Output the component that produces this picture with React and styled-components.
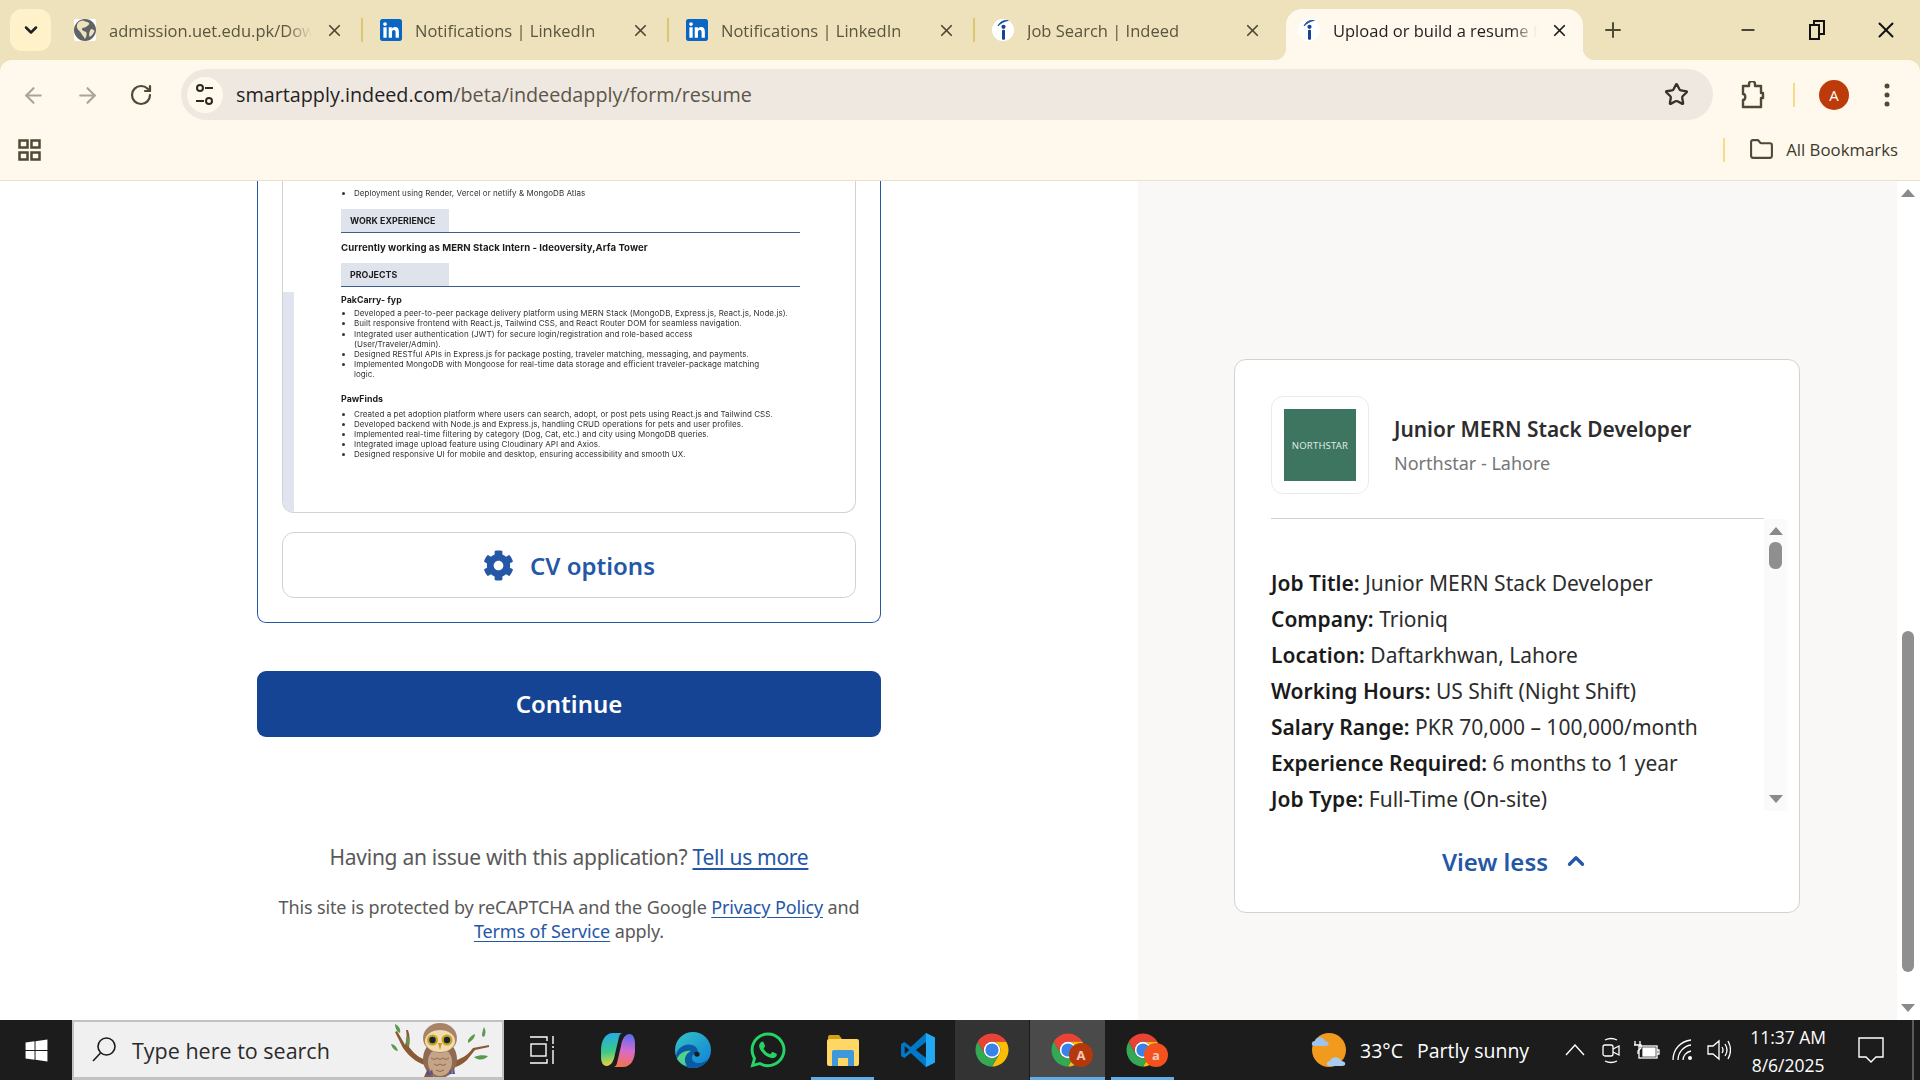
import React from 'react'
import styled, { createGlobalStyle } from 'styled-components'
import {
  ArrowLeft,
  ArrowRight,
  ChevronDown,
  ChevronUp,
  Folder,
  Minus,
  Plus,
  RotateCw,
  Star,
  X,
} from 'lucide-react'
import { FaCog, FaLinkedin, FaWhatsapp, FaWindows } from 'react-icons/fa'

const blue = '#2557a7'
const gray = '#595959'
const uiFont = '"Open Sans", "Noto Sans", sans-serif'
const pageFont = '"Noto Sans", "Open Sans", sans-serif'

const GlobalStyle = createGlobalStyle`
  html, body {
    margin: 0;
    padding: 0;
    overflow: hidden;
    background: #fff;
  }
  * {
    box-sizing: border-box;
  }
`

const Screen = styled.div`
  width: 1920px;
  height: 1080px;
  display: flex;
  flex-direction: column;
  overflow: hidden;
  font-family: ${pageFont};
`

/* browser chrome */

const TopBar = styled.div`
  background: #eee2bc;
`

const TabStrip = styled.div`
  height: 60px;
  display: flex;
  align-items: flex-end;
  padding-left: 10px;
`

const TabListButton = styled.div`
  width: 41px;
  height: 42px;
  margin: 0 6px 9px 0;
  border-radius: 12px;
  background: #fff1c9;
  color: #1f1f1f;
  display: flex;
  align-items: center;
  justify-content: center;
`

const Tab = styled.div`
  width: 304px;
  height: 42px;
  margin-bottom: 9px;
  padding: 0 17px 0 17px;
  display: flex;
  align-items: center;
  gap: 13px;
  color: #5a5440;
  font-family: ${uiFont};
`

const ActiveTab = styled(Tab)`
  position: relative;
  width: 297px;
  height: 51px;
  margin: 0 0 0 7px;
  padding: 0 14px 9px 12px;
  background: #fff8ec;
  border-radius: 16px 16px 0 0;
  color: #1f1f1f;

  &::before,
  &::after {
    content: '';
    position: absolute;
    bottom: 0;
    width: 12px;
    height: 12px;
  }
  &::before {
    left: -12px;
    background: radial-gradient(circle at 0 0, transparent 12px, #fff8ec 12.5px);
  }
  &::after {
    right: -12px;
    background: radial-gradient(circle at 100% 0, transparent 12px, #fff8ec 12.5px);
  }
`

const TabDivider = styled.div`
  width: 2px;
  height: 24px;
  margin-bottom: 18px;
  background: #dcc670;
`

const TabTitle = styled.div`
  flex: 1;
  min-width: 0;
  overflow: hidden;
  white-space: nowrap;
  font-size: 16.5px;
  -webkit-mask-image: linear-gradient(to left, transparent, #000 26px);
  mask-image: linear-gradient(to left, transparent, #000 26px);
`

const TabClose = styled(X)`
  flex: none;
  width: 19px;
  height: 19px;
  stroke-width: 2.2;
  color: ${p => (p.$active ? '#1f1f1f' : '#4f4a36')};
`

const FavWrap = styled.div`
  flex: none;
  width: 22px;
  height: 22px;
  border-radius: ${p => (p.$round ? '50%' : '2px')};
  background: #fff;
  display: flex;
  align-items: center;
  justify-content: center;
  overflow: hidden;
`

const NewTab = styled.div`
  margin: 0 0 9px 18px;
  height: 42px;
  display: flex;
  align-items: center;
  color: #4f4a36;
`

const WindowControls = styled.div`
  margin-left: auto;
  display: flex;
  height: 42px;
  margin-bottom: 9px;
  align-items: center;
`

const WindowButton = styled.div`
  width: 69px;
  display: flex;
  justify-content: center;
  color: #111;
`

const Toolbar = styled.div`
  height: 70px;
  padding: 0 0 0 6px;
  display: flex;
  align-items: center;
  background: #fff8ec;
  border-radius: 12px 12px 0 0;
`

const NavButton = styled.div`
  width: 54px;
  display: flex;
  justify-content: center;
  color: ${p => (p.$dim ? '#a8a498' : '#4f4a36')};
`

const Omnibox = styled.div`
  width: 1532px;
  height: 51px;
  margin: 0 0 1px 13px;
  padding: 0 24px 0 6px;
  border-radius: 26px;
  background: #efe8e1;
  display: flex;
  align-items: center;
`

const SiteChip = styled.div`
  flex: none;
  width: 36px;
  height: 36px;
  border-radius: 50%;
  background: #fff8ec;
  display: flex;
  align-items: center;
  justify-content: center;
  margin-right: 13px;
`

const Url = styled.div`
  flex: 1;
  font-family: ${uiFont};
  font-size: 19.75px;
  color: #5a5648;
  white-space: nowrap;
`

const UrlHost = styled.span`
  color: #1f1f1f;
`

const ToolbarCell = styled.div`
  width: ${p => p.$w}px;
  display: flex;
  justify-content: center;
  align-items: center;
  color: #4f4a36;
`

const BarDivider = styled.div`
  flex: none;
  width: 2px;
  height: 24px;
  background: #f6dc88;
`

const Avatar = styled.div`
  width: 30px;
  height: 30px;
  border-radius: 50%;
  background: #bd3a0b;
  color: #fff;
  font-family: ${uiFont};
  font-size: 15px;
  display: flex;
  align-items: center;
  justify-content: center;
`

const BookmarksBar = styled.div`
  height: 51px;
  padding: 0 22px 11px 18px;
  display: flex;
  align-items: center;
  background: #fff8ec;
  border-bottom: 1px solid #ebe1cd;
`

const BookmarksRight = styled.div`
  margin-left: auto;
  display: flex;
  align-items: center;
`

const BookmarkLabel = styled.span`
  margin-left: 12px;
  font-family: ${uiFont};
  font-size: 16.8px;
  color: #3c3a2e;
  white-space: nowrap;
`

const FolderIcon = styled(Folder)`
  margin-left: 24px;
  color: #4f4a36;
`

/* page */

const Page = styled.div`
  flex: 1;
  min-height: 0;
  display: flex;
  overflow: hidden;
`

const Main = styled.main`
  width: 1138px;
  flex: none;
  padding-left: 257px;
  background: #fff;
`

const Column = styled.div`
  width: 624px;
`

const FormCard = styled.div`
  padding: 0 24px 24px;
  border: 1px solid ${blue};
  border-top: none;
  border-radius: 0 0 9px 9px;
`

const Preview = styled.div`
  height: 332px;
  display: flex;
  overflow: hidden;
  border: 1px solid #d4d2d0;
  border-top: none;
  border-radius: 0 0 12px 12px;
`

const ResumeStrip = styled.div`
  flex: none;
  width: 11px;
  margin-top: 111px;
  background: #dfe4ee;
`

const Resume = styled.div`
  flex: 1;
  min-width: 0;
  padding: 7px 55px 0 47px;
  font-family: Inter, sans-serif;
  font-size: 8px;
  letter-spacing: 0.04px;
  line-height: 10.2px;
  color: #333;
  filter: blur(0.3px);
`

const ResumeList = styled.ul`
  margin: ${p => p.$top || 0}px 0 0;
  padding: 0 0 0 13px;
`

const ResumeItem = styled.li`
  margin: 0;
  padding: 0;
  white-space: nowrap;
`

const SectionHead = styled.div`
  margin-top: ${p => p.$top}px;
  border-bottom: 1.5px solid #3c5d92;
`

const SectionTag = styled.div`
  width: 108px;
  height: 23px;
  padding-left: 9px;
  display: flex;
  align-items: center;
  background: #dee3ec;
  font-weight: 700;
  font-size: 8.8px;
  color: #1c1c1c;
`

const ResumeLine = styled.div`
  margin-top: ${p => p.$top}px;
  font-weight: 700;
  font-size: ${p => p.$size || 8.8}px;
  line-height: 12px;
  color: #1c1c1c;
`

const CvButton = styled.div`
  height: 66px;
  margin-top: 19px;
  border: 1px solid #d4d2d0;
  border-radius: 12px;
  display: flex;
  align-items: center;
  justify-content: center;
  gap: 16px;
  color: ${blue};
  font-size: 24px;
  font-weight: 600;
`

const ContinueButton = styled.div`
  height: 66px;
  margin-top: 48px;
  padding-bottom: 2px;
  border-radius: 9px;
  background: #164494;
  color: #fff;
  font-size: 24px;
  font-weight: 600;
  display: flex;
  align-items: center;
  justify-content: center;
`

const IssueText = styled.p`
  margin: 105px 0 0;
  text-align: center;
  font-size: 21px;
  letter-spacing: -0.28px;
  line-height: 30px;
  color: ${gray};
`

const LegalText = styled.p`
  margin: 23px 0 0;
  text-align: center;
  font-size: 18px;
  letter-spacing: -0.13px;
  line-height: 24px;
  color: ${gray};
`

const TextLink = styled.a`
  color: ${blue};
  text-decoration: underline;
  text-underline-offset: 3px;
`

const Side = styled.aside`
  flex: 1;
  min-width: 0;
  padding: 178px 0 0 96px;
  background: #f9f8f6;
`

const JobCard = styled.div`
  width: 566px;
  height: 554px;
  padding: 36px 12px 0 36px;
  background: #fff;
  border: 1px solid #d4d2d0;
  border-radius: 12px;
`

const JobHeader = styled.div`
  width: 493px;
  display: flex;
  align-items: center;
  gap: 25px;
  padding-bottom: 24px;
  border-bottom: 1px solid #d4d2d0;
`

const LogoBox = styled.div`
  flex: none;
  width: 98px;
  height: 98px;
  border: 1px solid #ecebe9;
  border-radius: 12px;
  display: flex;
  align-items: center;
  justify-content: center;
`

const Logo = styled.div`
  width: 72px;
  height: 72px;
  background: #3d7561;
  color: #dfeae5;
  font-size: 9.5px;
  letter-spacing: 0.2px;
  display: flex;
  align-items: center;
  justify-content: center;
`

const JobTitle = styled.div`
  font-size: 20.9px;
  font-weight: 600;
  line-height: 28px;
  color: #2d2d2d;
`

const JobCompany = styled.div`
  margin-top: 7px;
  font-size: 18px;
  line-height: 26px;
  color: #767676;
`

const ScrollRow = styled.div`
  height: 292px;
  display: flex;
`

const JobBody = styled.div`
  width: 493px;
  padding-top: 46px;
`

const JobLine = styled.div`
  font-size: 21px;
  line-height: 36px;
  color: #2d2d2d;
  white-space: nowrap;
`

const JobLabel = styled.b`
  font-weight: 600;
  color: #1a1a1a;
`

const MiniScroll = styled.div`
  width: 23px;
  padding: 8px 0 8px;
  background: #fafafa;
  display: flex;
  flex-direction: column;
  align-items: center;
`

const Arrow = styled.div`
  flex: none;
  width: 0;
  height: 0;
  border-left: 7.5px solid transparent;
  border-right: 7.5px solid transparent;
  ${p => (p.$down ? 'margin-top: auto;' : '')}
  border-${p => (p.$down ? 'top' : 'bottom')}: 8px solid #8a8a8a;
`

const MiniThumb = styled.div`
  width: 13px;
  height: 27px;
  margin-top: 7px;
  border-radius: 6px;
  background: #8f8f8f;
`

const ViewLess = styled.div`
  height: 36px;
  margin-top: 32px;
  padding-right: 4px;
  width: 493px;
  display: flex;
  align-items: center;
  justify-content: center;
  gap: 15px;
  color: ${blue};
  font-size: 24px;
  font-weight: 600;
`

const PageScroll = styled.div`
  flex: none;
  width: 23px;
  padding: 8px 1px 8px 0;
  background: #fff;
  display: flex;
  flex-direction: column;
  align-items: center;
`

const PageThumb = styled.div`
  width: 12px;
  height: 341px;
  margin-top: 434px;
  border-radius: 6px;
  background: #8f8f8f;
`

/* taskbar */

const Taskbar = styled.footer`
  flex: none;
  height: 60px;
  display: flex;
  align-items: stretch;
  background: #1c1c1c;
  color: #fff;
  font-family: ${uiFont};
`

const StartButton = styled.div`
  width: 72px;
  display: flex;
  align-items: center;
  justify-content: center;
  color: #fff;
`

const SearchBox = styled.div`
  width: 432px;
  display: flex;
  align-items: center;
  padding: 0 8px 0 18px;
  background: #f0f0f0;
  border: 2px solid #c2c2c2;
  border-bottom-width: 3px;
  color: #2b2b2b;
  font-size: 21.5px;
`

const SearchLabel = styled.span`
  margin: 2px 0 0 16px;
  white-space: nowrap;
`

const OwlWrap = styled.div`
  margin-left: auto;
  align-self: flex-end;
  display: flex;
`

const TaskCell = styled.div`
  position: relative;
  flex: none;
  width: ${p => p.$w || 75}px;
  display: flex;
  align-items: center;
  justify-content: center;
  background: ${p =>
    p.$state === 'focus' ? '#4a4a4a' : p.$state === 'open' ? '#333' : 'none'};
  border-right: ${p => (p.$state === 'open' ? '1px solid #1c1c1c' : 'none')};

  &::after {
    content: '';
    display: ${p => (p.$bar ? 'block' : 'none')};
    position: absolute;
    bottom: 0;
    left: ${p => (p.$bar === 'full' ? 0 : 6)}px;
    right: ${p => (p.$bar === 'full' ? 0 : 6)}px;
    height: 3px;
    background: #63ace5;
  }
`

const ChromeBadge = styled.span`
  position: absolute;
  left: 39px;
  top: 23px;
  width: 24px;
  height: 24px;
  border-radius: 50%;
  background: ${p => p.$color};
  color: #f5c9b5;
  font-size: 13px;
  font-weight: 700;
  display: flex;
  align-items: center;
  justify-content: center;
`

const Weather = styled.div`
  margin-left: 131px;
  display: flex;
  align-items: center;
  font-size: 19.5px;
  white-space: nowrap;
`

const WeatherTemp = styled.span`
  margin: 0 14px 0 13px;
`

const Tray = styled.div`
  margin-left: 28px;
  display: flex;
`

const TrayCell = styled.div`
  width: 36px;
  display: flex;
  align-items: center;
  justify-content: center;
`

const Clock = styled.div`
  width: 100px;
  margin-left: 1px;
  padding-top: 2px;
  display: flex;
  flex-direction: column;
  justify-content: center;
  align-items: center;
  font-size: 17.5px;
  line-height: 28px;
`

const NotifyCell = styled.div`
  width: 66px;
  display: flex;
  align-items: center;
  justify-content: center;
`

const EdgeLine = styled.div`
  width: 2px;
  margin-left: auto;
  margin-right: 6px;
  background: #5a5a5a;
`

/* drawings */

const IndeedIcon = () => (
  <svg width="14" height="22" viewBox="0 0 14 22">
    <path d="M2 7C4 2.6 8 1 12.5 1.4 8.5 2 5 4 2 7Z" fill="#2557a7" stroke="#2557a7" strokeWidth="1" />
    <circle cx="7.5" cy="7.8" r="2.1" fill="#164494" />
    <rect x="6" y="10.8" width="3" height="10" rx="1" fill="#164494" />
  </svg>
)

const GlobeIcon = () => (
  <svg width="22" height="22" viewBox="0 0 22 22">
    <circle cx="11" cy="11" r="11" fill="#5f6368" />
    <path d="M9 1.5c2 1.500 5 1 6 2.500s-2 3-3 4-4 0-4 2 3 2 4 3 1 4-1 7c-1-2-3-4-4-6S2 10 3 6s4-4 6-4.500ZM17 10c2 0 3 1 3.500 2-1 3-3 5-5 6-1-3 0-6 1.500-8Z" fill="#eee2bc" />
  </svg>
)

const ChromeLogo = ({ size = 36 }) => (
  <svg width={size} height={size} viewBox="0 0 48 48">
    <path d="M43.050 13A22 22 0 0 0 4.950 13L14.470 29.500A11 11 0 0 1 24 13Z" fill="#ea4335" />
    <path d="M43.050 13H24A11 11 0 0 1 33.530 29.500L24 46A22 22 0 0 0 43.050 13Z" fill="#fbbc04" />
    <path d="M4.950 13L14.470 29.500A11 11 0 0 0 33.530 29.500L24 46A22 22 0 0 1 4.950 13Z" fill="#34a853" />
    <circle cx="24" cy="24" r="11" fill="#fff" />
    <circle cx="24" cy="24" r="8.800" fill="#3b82e8" />
  </svg>
)

const CopilotIcon = () => (
  <svg width="36" height="36" viewBox="0 0 36 36">
    <defs>
      <linearGradient id="copA" x1="0.4" y1="0" x2="0.5" y2="1">
        <stop offset="0" stopColor="#28a8e8" />
        <stop offset="0.55" stopColor="#39c98a" />
        <stop offset="1" stopColor="#f5d13c" />
      </linearGradient>
      <linearGradient id="copB" x1="0.5" y1="0" x2="0.4" y2="1">
        <stop offset="0" stopColor="#f4734a" />
        <stop offset="0.5" stopColor="#d66bcf" />
        <stop offset="1" stopColor="#5a6cf0" />
      </linearGradient>
    </defs>
    <path d="M13 1h9c-2 1-2.500 2-3 4l-4 17c-1 7-4 12-8.500 12C3 34 1 30 1 25v-7C1 9 5 1 13 1Z" fill="url(#copA)" />
    <path transform="rotate(180 18 18)" d="M13 1h9c-2 1-2.500 2-3 4l-4 17c-1 7-4 12-8.500 12C3 34 1 30 1 25v-7C1 9 5 1 13 1Z" fill="url(#copB)" />
  </svg>
)

const EdgeIcon = () => (
  <svg width="36" height="36" viewBox="0 0 36 36">
    <defs>
      <linearGradient id="edgeA" x1="0" y1="0" x2="1" y2="1">
        <stop offset="0" stopColor="#34c3c8" />
        <stop offset="1" stopColor="#0f7fd6" />
      </linearGradient>
    </defs>
    <circle cx="18" cy="18" r="18" fill="url(#edgeA)" />
    <path d="M1 24c1-9 10-13 16-11 5 1 7 6 5 9l-3 0c-4 3-2 10 6 9 2 0 6-2 8-4-3 6-9 9-15 9C10 36 3 31 1 24Z" fill="#0a5aa8" />
    <path d="M20 20c3-1 6 1 4 4-1 1-3 1-4 0-1-1-1-3 0-4Z" fill="#1c1c1c" />
    <path d="M12 34c-4-6-2-12 4-15-7-1-12 3-14 8 2 3 5 6 10 7Z" fill="#4fd18a" />
  </svg>
)

const ExplorerIcon = () => (
  <svg width="32" height="31" viewBox="0 0 32 31">
    <path d="M1 2a2 2 0 0 1 2-2h9l3 4H1Z" fill="#d69e14" />
    <rect x="0" y="4" width="32" height="27" rx="2" fill="#fed765" />
    <path d="M5 31V17a2 2 0 0 1 2-2h18a2 2 0 0 1 2 2v14h-6v-8H11v8Z" fill="#3f97dc" />
  </svg>
)

const VsCodeIcon = () => (
  <svg width="36" height="36" viewBox="0 0 100 100">
    <path d="M72 3 30 42 12 28 3 33v34l9 5 18-14 42 39 25-12V15Z" fill="#0078c8" />
    <path d="M72 3l25 12v70L72 97Z" fill="#23a9f1" />
    <path d="M72 28 44 50l28 22ZM13 39v22l13-11Z" fill="#1c1c1c" />
  </svg>
)

const Owl = () => (
  <svg width="104" height="55" viewBox="0 0 104 55">
    <path d="M34 55c2-5 4-9 6-11-10-1-20-8-27-18-2-4-5-10-8-16l2-1c3 5 6 10 8 14 2-6 2-9 1-15h2c2 6 2 11 1 17 6 8 13 13 22 14l20 1c10-3 16-6 22-14l16-3 0 2-14 3-8 10c-6 6-13 8-22 9-6 1-10 4-12 8Z" fill="#8a5a34" />
    <path d="M1 22c3 0 6 3 7 7-3 0-6-3-7-7ZM5 2c4 2 6 5 5 9-3-1-5-5-5-9ZM17 14c3 3 3 7 1 11-2-3-3-8-1-11ZM78 18c2-3 4-5 7-6 0 4-3 7-7 9ZM92 14c0-4 1-6 2-9 2 3 2 7 0 10ZM84 35c5-2 10-2 14-1-3 4-9 5-14 1Z" fill="#5b9a4e" />
    <ellipse cx="50" cy="37" rx="17" ry="19" fill="#8f6a52" />
    <ellipse cx="50" cy="40" rx="12" ry="14" fill="#c6a487" />
    <path d="M41 36q3 3 6 0M47 36q3 3 6 0M53 36q3 3 6 0M44 42q3 3 6 0M50 42q3 3 6 0M46 48q4 3 8 0" fill="none" stroke="#8f6a52" strokeWidth="1" />
    <ellipse cx="50" cy="16" rx="17" ry="15" fill="#a78469" />
    <ellipse cx="50" cy="19" rx="15" ry="11" fill="#f0dcae" />
    <circle cx="42.500" cy="18" r="5.500" fill="#c9a21c" />
    <circle cx="57" cy="18" r="5.500" fill="#c9a21c" />
    <circle cx="42.500" cy="18" r="3.200" fill="#16233f" />
    <circle cx="57" cy="18" r="3.200" fill="#16233f" />
    <path d="M48 21h4l-2 7Z" fill="#c8962e" />
    <path d="M36 53l2-6 2 5 2-5 1 5ZM59 52l1-5 2 5 2-6 1 6Z" fill="#4a4fa0" />
  </svg>
)

const WeatherIcon = () => (
  <svg width="36" height="38" viewBox="0 0 36 38">
    <circle cx="18" cy="19" r="17" fill="#f29a1d" />
    <path d="M3 15c-3 0-3-5 1-5 1-5 9-5 10 0 4 0 5 5 1 5Z" fill="#9dc3ee" />
    <path d="M18 35c-3 0-3-5 1-5 1-5 10-5 11 0 5 0 6 5 1 5Z" fill="#a9cbf0" />
  </svg>
)

const GridIcon = () => (
  <svg width="23" height="22" viewBox="0 0 23 22" fill="none" stroke="#4f4a36" strokeWidth="2.500">
    <rect x="1.500" y="1.500" width="8" height="7" />
    <rect x="13.500" y="1.500" width="8" height="7" />
    <rect x="1.500" y="13.500" width="8" height="7" />
    <rect x="13.500" y="13.500" width="8" height="7" />
  </svg>
)

const TuneIcon = () => (
  <svg width="20" height="24" viewBox="0 0 20 24" fill="none" stroke="#2b2b22" strokeWidth="2">
    <circle cx="5" cy="5" r="3" />
    <path d="M10 5h8M1 18h8" />
    <circle cx="14" cy="18" r="3" />
  </svg>
)

const PuzzleIcon = () => (
  <svg width="24" height="28" viewBox="0 0 24 28" fill="none" stroke="#4f4a36" strokeWidth="2.400">
    <path d="M2 5h6V3a3 3 0 0 1 6 0v2h6v7h2v5h-2v9H2v-7c3 0 3-6 0-6Z" strokeLinejoin="round" />
  </svg>
)

const RestoreIcon = () => (
  <svg width="16" height="20" viewBox="0 0 16 20" fill="none" stroke="#111" strokeWidth="2">
    <rect x="1" y="5" width="9" height="14" />
    <path d="M5 5V1h10v13h-5" />
  </svg>
)

const DotsIcon = () => (
  <svg width="6" height="24" viewBox="0 0 6 24" fill="#4f4a36">
    <circle cx="3" cy="3" r="2.500" />
    <circle cx="3" cy="12" r="2.500" />
    <circle cx="3" cy="21" r="2.500" />
  </svg>
)

const MagnifierIcon = () => (
  <svg width="24" height="25" viewBox="0 0 24 25" fill="none" stroke="#1c1c1c" strokeWidth="1.600">
    <circle cx="14.500" cy="9.500" r="8.500" />
    <path d="M8.500 16 1 24" />
  </svg>
)

const TaskViewIcon = () => (
  <svg width="24" height="28" viewBox="0 0 24 28" fill="none" stroke="#fff" strokeWidth="1.400">
    <path d="M0 1h17v4M0 27h17v-4M0 5h0" />
    <rect x="1" y="8" width="15" height="12" />
    <path d="M23 0v8M23 14v14M22 11h2" />
  </svg>
)

const CaretIcon = () => (
  <svg width="20" height="12" viewBox="0 0 20 12" fill="none" stroke="#fff" strokeWidth="1.400">
    <path d="M1 11 10 1l9 10" />
  </svg>
)

const CameraIcon = () => (
  <svg width="18" height="27" viewBox="0 0 18 27" fill="none" stroke="#fff" strokeWidth="1.300">
    <path d="M3 3q6-3 12 0M3 24q6 3 12 0" />
    <rect x="1" y="8" width="10" height="11" rx="2" />
    <path d="M11 12l6-3v9l-6-3" />
  </svg>
)

const BatteryIcon = () => (
  <svg width="26" height="20" viewBox="0 0 26 20" fill="none" stroke="#fff" strokeWidth="1.300">
    <rect x="5" y="6" width="18" height="12" />
    <rect x="9" y="8" width="12" height="8" fill="#fff" />
    <path d="M23 10h2v4h-2" />
    <path d="M1 1v4M6 1v4M0 5h7v3l-3 3v3" />
  </svg>
)

const WifiIcon = () => (
  <svg width="22" height="22" viewBox="0 0 22 22" fill="none" stroke="#fff" strokeWidth="1.300">
    <path d="M1 21C1 10 9 2 19 1M6 21c0-8 6-14 13-15M11 21c0-4 3-8 8-9" />
    <circle cx="18" cy="19" r="2" fill="#fff" stroke="none" />
  </svg>
)

const SpeakerIcon = () => (
  <svg width="24" height="22" viewBox="0 0 24 22" fill="none" stroke="#fff" strokeWidth="1.300">
    <path d="M1 7h5l6-5v18l-6-5H1Z" />
    <path d="M15 8q2 3 0 6M18 5q4 6 0 12M21 2q5 9 0 18" />
  </svg>
)

const NotifyIcon = () => (
  <svg width="26" height="26" viewBox="0 0 26 26" fill="none" stroke="#fff" strokeWidth="1.400">
    <path d="M1 1h24v19H18l-5 5-5-5H1Z" />
  </svg>
)

const tabs = [
  { title: 'admission.uet.edu.pk/Downloads', icon: <GlobeIcon /> },
  { title: 'Notifications | LinkedIn', icon: <FaLinkedin size={26} color="#0a66c2" /> },
  { title: 'Notifications | LinkedIn', icon: <FaLinkedin size={26} color="#0a66c2" /> },
  { title: 'Job Search | Indeed', icon: <IndeedIcon />, round: true },
]

const projectOne = [
  'Developed a peer-to-peer package delivery platform using MERN Stack (MongoDB, Express.js, React.js, Node.js).',
  'Built responsive frontend with React.js, Tailwind CSS, and React Router DOM for seamless navigation.',
  <>
    Integrated user authentication (JWT) for secure login/registration and role-based access
    <br />
    (User/Traveler/Admin).
  </>,
  'Designed RESTful APIs in Express.js for package posting, traveler matching, messaging, and payments.',
  <>
    Implemented MongoDB with Mongoose for real-time data storage and efficient traveler-package matching
    <br />
    logic.
  </>,
]

const projectTwo = [
  'Created a pet adoption platform where users can search, adopt, or post pets using React.js and Tailwind CSS.',
  'Developed backend with Node.js and Express.js, handling CRUD operations for pets and user profiles.',
  'Implemented real-time filtering by category (Dog, Cat, etc.) and city using MongoDB queries.',
  'Integrated image upload feature using Cloudinary API and Axios.',
  'Designed responsive UI for mobile and desktop, ensuring accessibility and smooth UX.',
]

const jobLines = [
  ['Job Title:', 'Junior MERN Stack Developer'],
  ['Company:', 'Trioniq'],
  ['Location:', 'Daftarkhwan, Lahore'],
  ['Working Hours:', 'US Shift (Night Shift)'],
  ['Salary Range:', 'PKR 70,000 – 100,000/month'],
  ['Experience Required:', '6 months to 1 year'],
  ['Job Type:', 'Full-Time (On-site)'],
]

export default function App() {
  return (
    <Screen>
      <GlobalStyle />

      <TopBar>
        <TabStrip>
          <TabListButton>
            <ChevronDown size={20} strokeWidth={3} />
          </TabListButton>
          {tabs.map((tab, index) => (
            <React.Fragment key={index}>
              <Tab>
                <FavWrap $round={tab.round}>{tab.icon}</FavWrap>
                <TabTitle>{tab.title}</TabTitle>
                <TabClose />
              </Tab>
              {index < 3 && <TabDivider />}
            </React.Fragment>
          ))}
          <ActiveTab>
            <FavWrap $round>
              <IndeedIcon />
            </FavWrap>
            <TabTitle>Upload or build a resume for this application</TabTitle>
            <TabClose $active />
          </ActiveTab>
          <NewTab>
            <Plus size={24} />
          </NewTab>
          <WindowControls>
            <WindowButton>
              <Minus size={20} />
            </WindowButton>
            <WindowButton>
              <RestoreIcon />
            </WindowButton>
            <WindowButton>
              <X size={26} strokeWidth={1.8} />
            </WindowButton>
          </WindowControls>
        </TabStrip>

        <Toolbar>
          <NavButton $dim>
            <ArrowLeft size={25} />
          </NavButton>
          <NavButton $dim>
            <ArrowRight size={25} />
          </NavButton>
          <NavButton>
            <RotateCw size={24} strokeWidth={2.2} />
          </NavButton>
          <Omnibox>
            <SiteChip>
              <TuneIcon />
            </SiteChip>
            <Url>
              <UrlHost>smartapply.indeed.com</UrlHost>/beta/indeedapply/form/resume
            </Url>
            <Star size={25} strokeWidth={2.2} color="#33312a" />
          </Omnibox>
          <ToolbarCell $w={80}>
            <PuzzleIcon />
          </ToolbarCell>
          <BarDivider />
          <ToolbarCell $w={78}>
            <Avatar>A</Avatar>
          </ToolbarCell>
          <ToolbarCell $w={28}>
            <DotsIcon />
          </ToolbarCell>
        </Toolbar>

        <BookmarksBar>
          <GridIcon />
          <BookmarksRight>
            <BarDivider />
            <FolderIcon size={25} />
            <BookmarkLabel>All Bookmarks</BookmarkLabel>
          </BookmarksRight>
        </BookmarksBar>
      </TopBar>

      <Page>
        <Main>
          <Column>
            <FormCard>
              <Preview>
                <ResumeStrip />
                <Resume>
                  <ResumeList>
                    <ResumeItem>Deployment using Render, Vercel or netlify &amp; MongoDB Atlas</ResumeItem>
                  </ResumeList>
                  <SectionHead $top={11}>
                    <SectionTag>WORK EXPERIENCE</SectionTag>
                  </SectionHead>
                  <ResumeLine $top={9} $size={9.6}>
                    Currently working as MERN Stack Intern - Ideoversity,Arfa Tower
                  </ResumeLine>
                  <SectionHead $top={9}>
                    <SectionTag>PROJECTS</SectionTag>
                  </SectionHead>
                  <ResumeLine $top={7}>PakCarry- fyp</ResumeLine>
                  <ResumeList $top={2}>
                    {projectOne.map((line, index) => (
                      <ResumeItem key={index}>{line}</ResumeItem>
                    ))}
                  </ResumeList>
                  <ResumeLine $top={13}>PawFinds</ResumeLine>
                  <ResumeList $top={4}>
                    {projectTwo.map(line => (
                      <ResumeItem key={line}>{line}</ResumeItem>
                    ))}
                  </ResumeList>
                </Resume>
              </Preview>
              <CvButton>
                <FaCog size={31} />
                CV options
              </CvButton>
            </FormCard>
            <ContinueButton>Continue</ContinueButton>
            <IssueText>
              Having an issue with this application? <TextLink>Tell us more</TextLink>
            </IssueText>
            <LegalText>
              This site is protected by reCAPTCHA and the Google <TextLink>Privacy Policy</TextLink> and
              <br />
              <TextLink>Terms of Service</TextLink> apply.
            </LegalText>
          </Column>
        </Main>

        <Side>
          <JobCard>
            <JobHeader>
              <LogoBox>
                <Logo>NORTHSTAR</Logo>
              </LogoBox>
              <div>
                <JobTitle>Junior MERN Stack Developer</JobTitle>
                <JobCompany>Northstar - Lahore</JobCompany>
              </div>
            </JobHeader>
            <ScrollRow>
              <JobBody>
                {jobLines.map(([label, value]) => (
                  <JobLine key={label}>
                    <JobLabel>{label}</JobLabel> {value}
                  </JobLine>
                ))}
              </JobBody>
              <MiniScroll>
                <Arrow />
                <MiniThumb />
                <Arrow $down />
              </MiniScroll>
            </ScrollRow>
            <ViewLess>
              View less
              <ChevronUp size={26} strokeWidth={3} />
            </ViewLess>
          </JobCard>
        </Side>

        <PageScroll>
          <Arrow />
          <PageThumb />
          <Arrow $down />
        </PageScroll>
      </Page>

      <Taskbar>
        <StartButton>
          <FaWindows size={25} />
        </StartButton>
        <SearchBox>
          <MagnifierIcon />
          <SearchLabel>Type here to search</SearchLabel>
          <OwlWrap>
            <Owl />
          </OwlWrap>
        </SearchBox>
        <TaskCell $w={76}>
          <TaskViewIcon />
        </TaskCell>
        <TaskCell>
          <CopilotIcon />
        </TaskCell>
        <TaskCell>
          <EdgeIcon />
        </TaskCell>
        <TaskCell>
          <FaWhatsapp size={40} color="#25d366" />
        </TaskCell>
        <TaskCell $bar="inset">
          <ExplorerIcon />
        </TaskCell>
        <TaskCell>
          <VsCodeIcon />
        </TaskCell>
        <TaskCell $state="open">
          <ChromeLogo />
        </TaskCell>
        <TaskCell $state="focus" $bar="full">
          <ChromeLogo />
          <ChromeBadge $color="#b5380c">A</ChromeBadge>
        </TaskCell>
        <TaskCell $bar="inset">
          <ChromeLogo />
          <ChromeBadge $color="#f4511e">a</ChromeBadge>
        </TaskCell>
        <Weather>
          <WeatherIcon />
          <WeatherTemp>33°C</WeatherTemp>
          Partly sunny
        </Weather>
        <Tray>
          <TrayCell>
            <CaretIcon />
          </TrayCell>
          <TrayCell>
            <CameraIcon />
          </TrayCell>
          <TrayCell>
            <BatteryIcon />
          </TrayCell>
          <TrayCell>
            <WifiIcon />
          </TrayCell>
          <TrayCell>
            <SpeakerIcon />
          </TrayCell>
        </Tray>
        <Clock>
          <span>11:37 AM</span>
          <span>8/6/2025</span>
        </Clock>
        <NotifyCell>
          <NotifyIcon />
        </NotifyCell>
        <EdgeLine />
      </Taskbar>
    </Screen>
  )
}
